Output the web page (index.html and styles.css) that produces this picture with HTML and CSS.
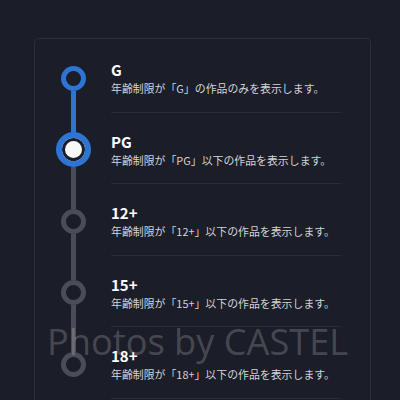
FILE: index.html
```html
<!DOCTYPE html>
<html lang="ja">
<head>
<meta charset="utf-8">
<link rel="stylesheet" href="styles.css">
</head>
<body>
<div class="card">
  <div class="row">
    <div class="rail">
      <span class="seg top none"></span>
      <span class="dot on"></span>
      <span class="seg on"></span>
    </div>
    <div class="content">
      <div class="title">G</div>
      <div class="desc">年齢制限が「G」の作品のみを表示します。</div>
    </div>
  </div>
  <div class="row">
    <div class="rail">
      <span class="seg top big on"></span>
      <span class="dot current"></span>
      <span class="seg"></span>
    </div>
    <div class="content">
      <div class="title">PG</div>
      <div class="desc">年齢制限が「PG」以下の作品を表示します。</div>
    </div>
  </div>
  <div class="row">
    <div class="rail">
      <span class="seg top"></span>
      <span class="dot"></span>
      <span class="seg"></span>
    </div>
    <div class="content">
      <div class="title">12+</div>
      <div class="desc">年齢制限が「12+」以下の作品を表示します。</div>
    </div>
  </div>
  <div class="row">
    <div class="rail">
      <span class="seg top"></span>
      <span class="dot"></span>
      <span class="seg"></span>
    </div>
    <div class="content">
      <div class="title">15+</div>
      <div class="desc">年齢制限が「15+」以下の作品を表示します。</div>
    </div>
  </div>
  <div class="row">
    <div class="rail">
      <span class="seg top"></span>
      <span class="dot"></span>
      <span class="seg none"></span>
    </div>
    <div class="content">
      <div class="title">18+</div>
      <div class="desc">年齢制限が「18+」以下の作品を表示します。</div>
    </div>
  </div>
</div>
<div class="watermark">Photos by CASTEL</div>
</body>
</html>
```

FILE: styles.css
```css
html, body {
  margin: 0;
  padding: 0;
  background: #1b1d28;
  height: 400px;
  overflow: hidden;
}

body {
  font-family: "Noto Sans CJK JP", "Noto Sans", sans-serif;
  color: #ffffff;
}

.card {
  margin: 38px 0 0 34px;
  width: 337px;
  height: 400px;
  box-sizing: border-box;
  border: 1px solid #2d303b;
  border-radius: 5px;
  padding-top: 2px;
}

.row {
  display: flex;
  height: 71.5px;
}

.rail {
  width: 76px;
  flex: none;
  display: flex;
  flex-direction: column;
  align-items: center;
}

.seg {
  flex: 1;
  width: 5px;
  background: #4a4c57;
}

.seg.top {
  flex: none;
  height: 24.5px;
}

.seg.top.big {
  height: 19.5px;
}

.seg.on {
  background: #2e74d3;
}

.seg.none {
  background: transparent;
}

.dot {
  flex: none;
  width: 25px;
  height: 25px;
  box-sizing: border-box;
  border: 5px solid #4a4c57;
  border-radius: 50%;
}

.dot.on {
  border-color: #2e74d3;
}

.dot.current {
  width: 35px;
  height: 35px;
  border: 6px solid #2e74d3;
  background: #f7f7f8;
  box-shadow: inset 0 0 0 3px #1b1d28;
}

.content {
  flex: 1;
  margin-right: 29px;
  border-bottom: 1px solid #2a2d38;
  padding-top: 19px;
}

.title {
  font-size: 15px;
  font-weight: 700;
  line-height: 19px;
  color: #ffffff;
}

.desc {
  margin-top: 1px;
  font-size: 10.9px;
  line-height: 16px;
  color: #d2d4da;
  white-space: nowrap;
}

.watermark {
  position: absolute;
  left: 47px;
  top: 317px;
  font-family: "Open Sans", "Noto Sans", sans-serif;
  font-size: 36.2px;
  line-height: 48px;
  color: rgba(255, 255, 255, 0.2);
  white-space: nowrap;
}
```
